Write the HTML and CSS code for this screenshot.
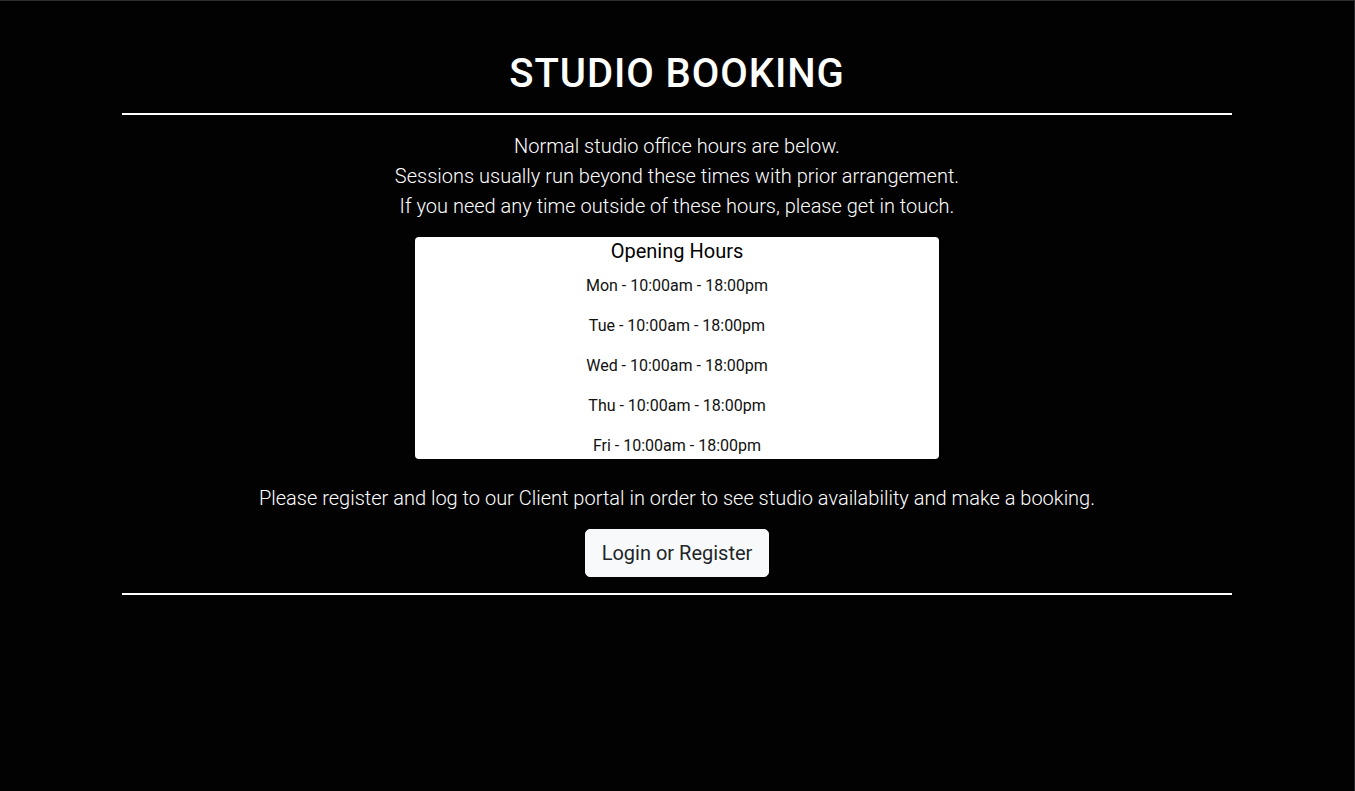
FILE: index.html
```html
<!DOCTYPE html>
<html lang="en">
<head>
<meta charset="utf-8">
<title>Studio Booking</title>
<link rel="stylesheet" href="styles.css">
</head>
<body>
<div class="page">
  <main class="container">
    <h1 class="title">STUDIO BOOKING</h1>
    <hr class="rule">
    <div class="intro">
      <p>Normal studio office hours are below.</p>
      <p>Sessions usually run beyond these times with prior arrangement.</p>
      <p>If you need any time outside of these hours, please get in touch.</p>
    </div>
    <section class="hours">
      <h5 class="hours-title">Opening Hours</h5>
      <ul class="hours-list">
        <li>Mon - 10:00am - 18:00pm</li>
        <li>Tue - 10:00am - 18:00pm</li>
        <li>Wed - 10:00am - 18:00pm</li>
        <li>Thu - 10:00am - 18:00pm</li>
        <li>Fri - 10:00am - 18:00pm</li>
      </ul>
    </section>
    <p class="portal">Please register and log to our Client portal in order to see studio availability and make a booking.</p>
    <div class="actions">
      <a class="btn" href="#">Login or Register</a>
    </div>
    <hr class="rule">
  </main>
</div>
</body>
</html>
```

FILE: styles.css
```css
* { box-sizing: border-box; }
html, body {
  margin: 0;
  padding: 0;
  background: #020202;
  height: 100%;
}
body {
  font-family: Roboto, "Liberation Sans", sans-serif;
  color: #fff;
}
.page {
  min-height: 100%;
  border-top: 1px solid #2b2d32;
  border-right: 1px solid #26282c;
}
.container {
  width: 1110px;
  margin: 0 auto;
  padding-top: 49px;
  display: flex;
  flex-direction: column;
  align-items: center;
  text-align: center;
}
.title {
  margin: 0 0 15px;
  font-size: 40px;
  line-height: 48px;
  font-weight: 500;
  letter-spacing: 0.93px;
}
.rule {
  width: 100%;
  margin: 0;
  border: 0;
  border-top: 2px solid #fff;
}
.intro {
  margin-top: 16px;
  font-weight: 300;
  font-size: 20px;
  line-height: 30px;
}
.intro p { margin: 0; }
.hours {
  margin-top: 16px;
  width: 524px;
  background: #fff;
  color: #000;
  border-radius: 4px;
  padding-top: 2px;
  padding-bottom: 1px;
}
.hours-title {
  margin: 0 0 11px;
  font-size: 20px;
  line-height: 24px;
  font-weight: 400;
}
.hours-list {
  list-style: none;
  margin: 0;
  padding: 0;
  display: flex;
  flex-direction: column;
  gap: 16px;
  font-size: 16px;
  line-height: 24px;
  color: #111;
}
.portal {
  margin: 24px 0 16px;
  font-weight: 300;
  font-size: 20px;
  line-height: 30px;
}
.actions { margin-bottom: 16px; }
.btn {
  display: inline-block;
  padding: 8px 16px;
  font-size: 20px;
  line-height: 30px;
  color: #212529;
  background: #f8f9fa;
  border: 1px solid #f8f9fa;
  border-radius: 5px;
  text-decoration: none;
}
```
